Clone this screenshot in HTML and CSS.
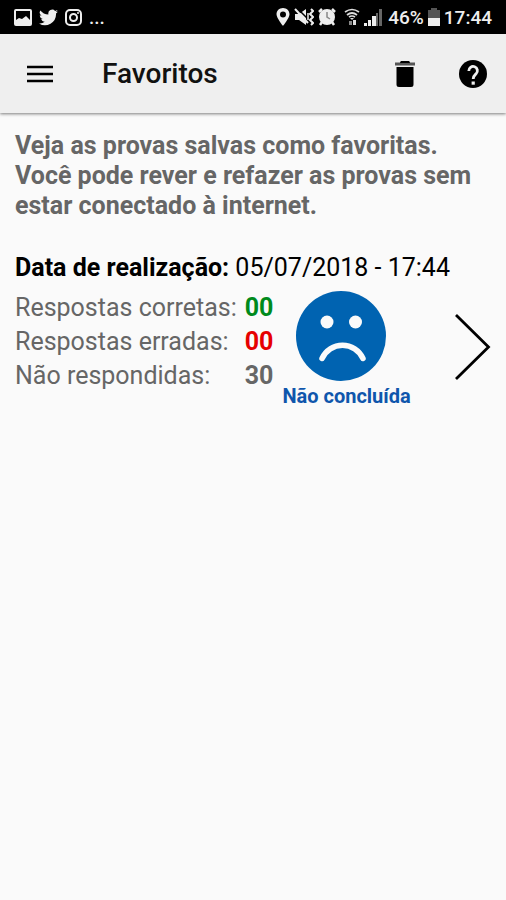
FILE: index.html
```html
<!DOCTYPE html>
<html lang="pt-BR">
<head>
<meta charset="utf-8">
<meta name="viewport" content="width=device-width, initial-scale=1">
<title>Favoritos</title>
<link rel="stylesheet" href="styles.css">
</head>
<body>
<div class="status-bar">
  <div class="notifications">
    <svg width="18" height="17" viewBox="0 0 18 17" aria-hidden="true"><path fill="#eee" fill-rule="evenodd" d="M2 0H16Q18 0 18 2V15Q18 17 16 17H2Q0 17 0 15V2Q0 0 2 0ZM2 2V11L5 9L8 10L12 7L16 11V2Z"/></svg>
    <svg width="19" height="17" viewBox="0 0 24 20" aria-hidden="true"><path fill="#eee" d="M24 2.4c-.9.4-1.8.7-2.8.8 1-.6 1.800-1.600 2.200-2.700-1 .6-2 1-3.100 1.200A4.900 4.900 0 0 0 11.900 6.100C7.700 6 4.100 4 1.700 1A4.900 4.900 0 0 0 3.200 7.600c-.8 0-1.600-.2-2.200-.6 0 2.300 1.600 4.400 3.900 4.900-.7.200-1.500.2-2.200.1.600 2 2.400 3.400 4.600 3.400A9.900 9.900 0 0 1 0 17.500 14 14 0 0 0 21.500 5c1-.7 1.800-1.600 2.500-2.600Z"/></svg>
    <svg width="17" height="17" viewBox="0 0 17 17" fill="none" stroke="#eee" stroke-width="2" aria-hidden="true"><rect x="1" y="1" width="15" height="15" rx="4"/><circle cx="8.500" cy="8.500" r="3.500"/><circle cx="13" cy="4" r="1" fill="#eee" stroke="none"/></svg>
    <span class="more">...</span>
  </div>
  <div class="indicators">
    <svg width="14" height="18" viewBox="0 0 14 18" aria-hidden="true"><path fill="#eee" fill-rule="evenodd" d="M7 0C3.200 0 .5 2.800.5 6.300.5 10 7 18 7 18s6.500-8 6.500-11.700C13.500 2.800 10.800 0 7 0Zm0 3.500a3 3 0 1 1 0 6 3 3 0 0 1 0-6Z"/></svg>
    <svg width="20" height="18" viewBox="0 0 20 18" aria-hidden="true"><path fill="#eee" d="M1 6H5L12 1V17L5 12H1Z"/><path d="M4 1L15 12" stroke="#000" stroke-width="1.500"/><path d="M1 1L14 15" stroke="#eee" stroke-width="2"/><path d="M17 1l2 2-3 3 3 3-3 3 3 3-2 2" fill="none" stroke="#eee" stroke-width="2"/><path d="M14 5v7" stroke="#eee" stroke-width="1.500"/></svg>
    <svg width="18" height="18" viewBox="0 0 18 18" aria-hidden="true"><path d="M1 4L4 1M14 1l3 3M4 14l-2 3M14 14l2 3" stroke="#eee" stroke-width="2.500"/><circle cx="9" cy="9" r="8" fill="#eee"/><path d="M9 4v5l3 2" fill="none" stroke="#888" stroke-width="1.500"/></svg>
    <svg class="wifi" width="16" height="18" viewBox="0 0 16 18" aria-hidden="true"><g fill="none" stroke="#ddd" stroke-width="1.700"><path d="M1 4Q8-1 15 4M3 7Q8 3 13 7M5 9Q8 7 11 9"/></g><path fill="#ddd" d="M6 10h4l-2 2ZM9 12h3v5H9Z"/><path fill="#888" d="M5 13h3v4H5Z"/></svg>
    <svg class="signal" width="18" height="18" viewBox="0 0 18 18" aria-hidden="true"><path fill="#eee" d="M0 15h3v3H0ZM4 12h3v6H4ZM8 8h4v10H8Z"/><path fill="#666" d="M12 5h2v13h-2ZM15 1h3v17h-3Z"/></svg>
    <span class="level">46%</span>
    <svg width="12" height="18" viewBox="0 0 12 18" aria-hidden="true"><path fill="#555" d="M3 0h6v2h3v8H0V2h3Z"/><path fill="#eee" d="M0 10h12v8H0Z"/></svg>
    <span>17:44</span>
  </div>
</div>

<header class="toolbar">
  <button class="icon-button" type="button" aria-label="Menu">
    <svg width="26" height="18" viewBox="0 0 26 18" aria-hidden="true"><path d="M0 2h26M0 9h26M0 16h26" stroke="#000" stroke-width="2.400"/></svg>
  </button>
  <h1 class="title">Favoritos</h1>
  <button class="icon-button" type="button" aria-label="Excluir">
    <svg width="20" height="26" viewBox="0 0 20 26" aria-hidden="true"><path fill="#555" d="M0 1.500h5L6 0h8l1 1.500h5v3H0Z"/><path fill="#000" d="M6 0h8l1 2H5ZM1.500 6h17v17.500q0 2.500-2.500 2.500H4q-2.500 0-2.500-2.500Z"/></svg>
  </button>
  <button class="icon-button help" type="button" aria-label="Ajuda">
    <svg width="28" height="28" viewBox="0 0 28 28" aria-hidden="true"><circle cx="14" cy="14" r="14"/><path d="M9.800 11a4.300 4.300 0 1 1 7.300 2.800C15.500 15.300 14.200 16 14.200 19" fill="none" stroke="#f0f0f0" stroke-width="2.800"/><path fill="#f0f0f0" d="M12.600 21.500h3.200v3.200h-3.200Z"/></svg>
  </button>
</header>

<main class="content">
  <p class="intro">Veja as provas salvas como favoritas. Você pode rever e refazer as provas sem estar conectado à internet.</p>
  <article class="exam">
    <h2 class="date"><strong>Data de realização:</strong> 05/07/2018 - 17:44</h2>
    <div class="summary">
      <dl class="scores">
        <dt>Respostas corretas:</dt><dd class="correct">00</dd>
        <dt>Respostas erradas:</dt><dd class="wrong">00</dd>
        <dt>Não respondidas:</dt><dd>30</dd>
      </dl>
      <div class="result">
        <svg class="face" width="90" height="90" viewBox="0 0 90 90" aria-hidden="true"><circle cx="45" cy="45" r="45" fill="#0063b1"/><circle cx="31" cy="31" r="6.500" fill="#fafafa"/><circle cx="59.500" cy="31" r="6.500" fill="#fafafa"/><path d="M26 67.500A22.500 22.500 0 0 1 67 67.500" fill="none" stroke="#fafafa" stroke-width="5.500" stroke-linecap="round"/></svg>
        <span>Não concluída</span>
      </div>
      <button class="open" type="button" aria-label="Abrir prova">
        <svg width="37" height="68" viewBox="0 0 37 68" aria-hidden="true"><path d="M2 2L34.500 34L2 66" fill="none" stroke="#000" stroke-width="2.800"/></svg>
      </button>
    </div>
  </article>
</main>
</body>
</html>
```
FILE: styles.css
```css
* {
  box-sizing: border-box;
}

body {
  margin: 0;
  min-height: 100vh;
  background: #fafafa;
  color: #666;
  font-family: Roboto, "Liberation Sans", sans-serif;
  font-size: 25px;
}

svg {
  display: block;
  flex: none;
}

h1,
h2,
p,
dl,
dd {
  margin: 0;
}

button {
  padding: 0;
  border: 0;
  background: none;
  cursor: pointer;
}

.status-bar {
  display: flex;
  justify-content: space-between;
  align-items: center;
  height: 34px;
  padding: 0 14px;
  background: #000;
  color: #eee;
  font-size: 19px;
  font-weight: 500;
}

.notifications,
.indicators {
  display: flex;
  align-items: center;
}

.notifications {
  gap: 7px;
}

.indicators {
  gap: 4px;
}

.wifi {
  margin-left: 4px;
}

.level {
  margin-left: 2px;
}

.toolbar {
  display: flex;
  align-items: center;
  height: 79px;
  padding: 0 17px 0 24px;
  background: #efefef;
  box-shadow: 0 1px 3px rgba(0, 0, 0, 0.5);
}

.icon-button {
  display: grid;
  place-items: center;
  width: 32px;
  height: 48px;
}

.help {
  margin-left: 36px;
}

.title {
  flex: 1;
  margin-left: 46px;
  color: #111;
  font-size: 28px;
  font-weight: 500;
}

.content {
  padding: 18px 15px;
}

.intro {
  font-weight: 700;
  line-height: 30px;
}

.exam {
  margin-top: 32px;
}

.date {
  color: #000;
  font-size: 25px;
  font-weight: 400;
  line-height: 30px;
}

.summary {
  display: flex;
  align-items: flex-start;
  margin-top: 8px;
}

.scores {
  display: grid;
  grid-template-columns: auto auto;
  column-gap: 8px;
  line-height: 34px;
}

.scores dd {
  font-weight: 700;
}

.scores .correct {
  color: #008a1c;
}

.scores .wrong {
  color: #e60000;
}

.result {
  margin-left: 9px;
  color: #0f56ac;
  font-size: 20px;
  font-weight: 700;
  line-height: 30px;
}

.face {
  margin-left: 14px;
}

.open {
  margin: 22px 0 0 auto;
}
```
